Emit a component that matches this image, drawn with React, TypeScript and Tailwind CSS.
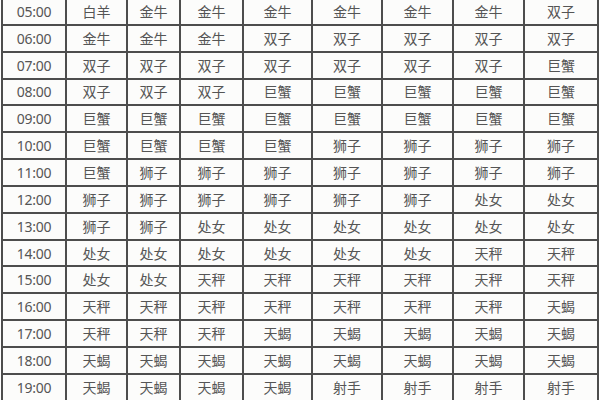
const rows: [string, string[]][] = [
  ['05:00', ['白羊', '金牛', '金牛', '金牛', '金牛', '金牛', '金牛', '双子']],
  ['06:00', ['金牛', '金牛', '金牛', '双子', '双子', '双子', '双子', '双子']],
  ['07:00', ['双子', '双子', '双子', '双子', '双子', '双子', '双子', '巨蟹']],
  ['08:00', ['双子', '双子', '双子', '巨蟹', '巨蟹', '巨蟹', '巨蟹', '巨蟹']],
  ['09:00', ['巨蟹', '巨蟹', '巨蟹', '巨蟹', '巨蟹', '巨蟹', '巨蟹', '巨蟹']],
  ['10:00', ['巨蟹', '巨蟹', '巨蟹', '巨蟹', '狮子', '狮子', '狮子', '狮子']],
  ['11:00', ['巨蟹', '狮子', '狮子', '狮子', '狮子', '狮子', '狮子', '狮子']],
  ['12:00', ['狮子', '狮子', '狮子', '狮子', '狮子', '狮子', '处女', '处女']],
  ['13:00', ['狮子', '狮子', '处女', '处女', '处女', '处女', '处女', '处女']],
  ['14:00', ['处女', '处女', '处女', '处女', '处女', '处女', '天秤', '天秤']],
  ['15:00', ['处女', '处女', '天秤', '天秤', '天秤', '天秤', '天秤', '天秤']],
  ['16:00', ['天秤', '天秤', '天秤', '天秤', '天秤', '天秤', '天秤', '天蝎']],
  ['17:00', ['天秤', '天秤', '天秤', '天蝎', '天蝎', '天蝎', '天蝎', '天蝎']],
  ['18:00', ['天蝎', '天蝎', '天蝎', '天蝎', '天蝎', '天蝎', '天蝎', '天蝎']],
  ['19:00', ['天蝎', '天蝎', '天蝎', '天蝎', '射手', '射手', '射手', '射手']],
]

export default function App() {
  return (
    <div className="w-[600px] h-[400px] overflow-hidden bg-white">
      {/* table lines come from the grid gap over a dark background */}
      <div
        className="ml-[1px] -mt-[3px] w-[598px] p-[2px] grid gap-[2px] bg-[#4d4d4d] grid-cols-[62px_59px_51px_61px_67px_68px_69px_69px_72px] auto-rows-[24.85px] text-[14px] text-[#555]"
        style={{ fontFamily: '"Noto Sans", "Noto Sans CJK SC", sans-serif' }}
      >
        {rows.map(([time, signs]) => (
          <div key={time} className="contents">
            <div className="bg-[#fcfcfb] flex items-center justify-center tracking-[-0.3px]">
              {time}
            </div>
            {signs.map((s, i) => (
              <div
                key={i}
                className="bg-[#fcfcfb] flex items-center justify-center"
              >
                {s}
              </div>
            ))}
          </div>
        ))}
      </div>
    </div>
  )
}
